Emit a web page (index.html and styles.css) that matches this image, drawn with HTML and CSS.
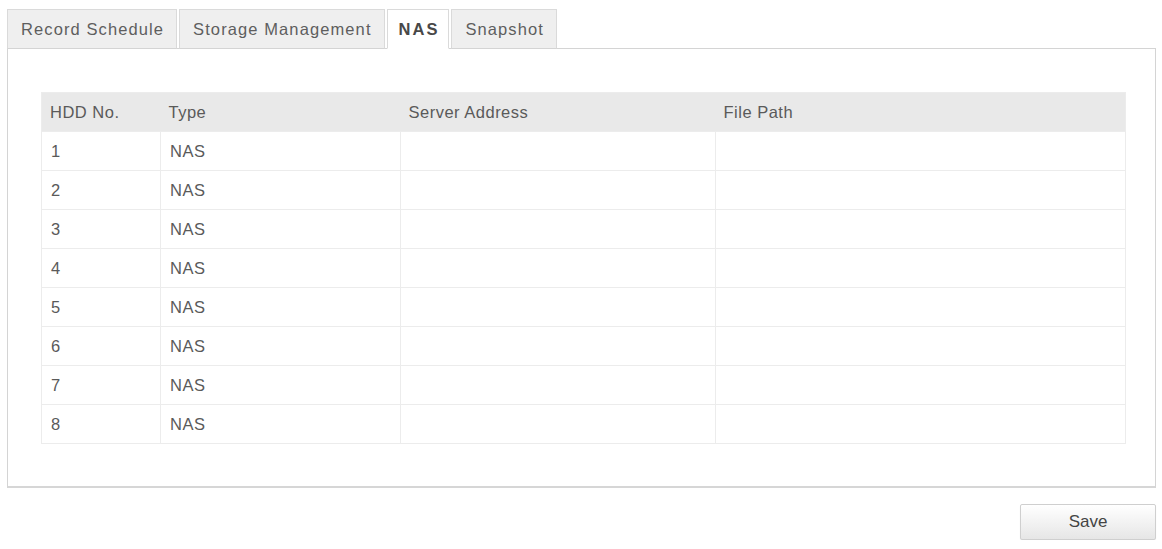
FILE: index.html
```html
<!DOCTYPE html>
<html>
<head>
<meta charset="utf-8">
<link rel="stylesheet" href="styles.css">
</head>
<body>
<div class="page">
  <div class="tabs">
    <div class="tab">Record Schedule</div>
    <div class="tab">Storage Management</div>
    <div class="tab active">NAS</div>
    <div class="tab">Snapshot</div>
  </div>
  <div class="panel">
    <table class="nas-table">
      <colgroup>
        <col class="c-hdd"><col class="c-type"><col class="c-server"><col class="c-path">
      </colgroup>
      <thead>
        <tr><th>HDD No.</th><th>Type</th><th>Server Address</th><th>File Path</th></tr>
      </thead>
      <tbody>
        <tr><td>1</td><td>NAS</td><td></td><td></td></tr>
        <tr><td>2</td><td>NAS</td><td></td><td></td></tr>
        <tr><td>3</td><td>NAS</td><td></td><td></td></tr>
        <tr><td>4</td><td>NAS</td><td></td><td></td></tr>
        <tr><td>5</td><td>NAS</td><td></td><td></td></tr>
        <tr><td>6</td><td>NAS</td><td></td><td></td></tr>
        <tr><td>7</td><td>NAS</td><td></td><td></td></tr>
        <tr><td>8</td><td>NAS</td><td></td><td></td></tr>
      </tbody>
    </table>
  </div>
  <div class="actions">
    <button class="btn-save">Save</button>
  </div>
</div>
</body>
</html>
```

FILE: styles.css
```css
html, body {
  margin: 0;
  padding: 0;
  background: #ffffff;
}
body {
  font-family: "Liberation Sans", Arial, sans-serif;
  color: #555555;
}
.page {
  padding: 9px 6px 0 7px;
}
.tabs {
  display: flex;
  gap: 2px;
  height: 40px;
  position: relative;
  z-index: 2;
}
.tab {
  box-sizing: border-box;
  height: 40px;
  line-height: 39px;
  padding: 0 12px 0 13px;
  font-size: 16.5px;
  letter-spacing: 1.1px;
  background: #efefef;
  border: 1px solid #dadada;
  border-bottom: 1px solid #d4d4d4;
  color: #5e5e5e;
  white-space: nowrap;
}
.tab.active {
  background: #ffffff;
  border-bottom-color: #ffffff;
  font-weight: bold;
  color: #484848;
  letter-spacing: 2px;
  padding: 0 9px 0 11px;
}
.panel {
  box-sizing: border-box;
  margin-top: -1px;
  height: 440px;
  border: 1px solid #d4d4d4;
  border-bottom: 2px solid #d6d6d6;
  padding: 43px 0 0 33px;
  background: #ffffff;
}
.nas-table {
  border-collapse: collapse;
  width: 1084px;
  table-layout: fixed;
  font-size: 16.5px;
  letter-spacing: 0.5px;
  border: 1px solid #ececec;
}
.c-hdd { width: 119px; }
.c-type { width: 240px; }
.c-server { width: 315px; }
.c-path { width: 410px; }
.nas-table th {
  height: 38px;
  background: #e9e9e9;
  font-weight: normal;
  text-align: left;
  padding: 0 8px;
  color: #5a5a5a;
}
.nas-table td {
  height: 38px;
  padding: 0 9px;
  border-top: 1px solid #ececec;
  border-left: 1px solid #ececec;
  color: #5a5a5a;
}
.nas-table td:first-child {
  border-left: none;
}
.actions {
  display: flex;
  justify-content: flex-end;
  margin-top: 16px;
}
.btn-save {
  width: 136px;
  height: 36px;
  font-family: "Liberation Sans", Arial, sans-serif;
  font-size: 17px;
  color: #444444;
  background: linear-gradient(#ffffff, #e6e6e6);
  border: 1px solid #cfcfcf;
  border-radius: 2px;
  box-shadow: 0 1px 1px rgba(0,0,0,0.08);
}
```
